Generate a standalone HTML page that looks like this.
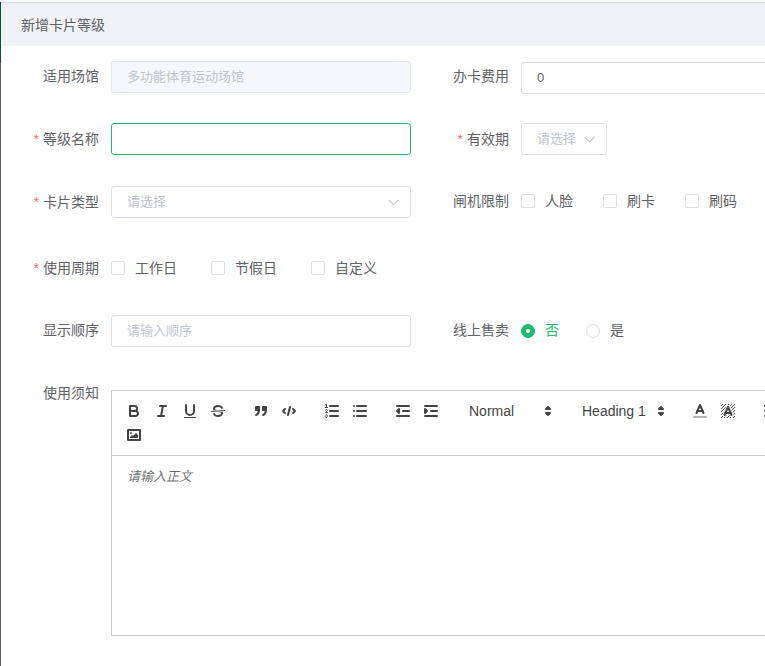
<!DOCTYPE html>
<html lang="zh-CN">
<head>
<meta charset="utf-8">
<title>新增卡片等级</title>
<style>
*{box-sizing:border-box;}
html,body{margin:0;padding:0;}
body{width:765px;height:666px;overflow:hidden;background:#fff;position:relative;
  font-family:"Liberation Sans",sans-serif;font-size:14px;color:#606266;}
.abs{position:absolute;}
#stripe-g{left:0;top:2px;width:1.4px;height:61px;background:#0b5532;}
#stripe-d{left:0;top:63px;width:1.4px;height:603px;background:#606060;}
#topstrip{left:0;top:0;width:765px;height:2px;background:#fafafb;}
#gap{left:1px;top:3px;width:1px;height:43px;background:#f8f9fb;}
#topline{left:1px;top:2px;width:764px;height:1px;background:#d4d6da;}
#header{left:1px;top:3px;width:764px;height:43px;background:#f0f2f5;}
#title{left:21px;top:3px;height:43px;line-height:44px;font-size:14px;color:#606266;white-space:nowrap;}
.lbl{position:absolute;height:32px;line-height:32px;font-size:14px;color:#606266;text-align:right;white-space:nowrap;padding-right:12px;}
.lbl.l{left:0;width:111px;}
.lbl.r{left:410px;width:111px;}
.req:before{content:"*";color:#f56c6c;margin-right:4px;}
.inp{position:absolute;height:32px;line-height:30px;border:1px solid #dcdfe6;border-radius:3px;background:#fff;
  padding:0 15px;font-size:13px;color:#606266;white-space:nowrap;overflow:hidden;}
.inp.dis{background:#f5f7fa;border-color:#e4e7ed;color:#c0c4cc;}
.inp.foc{border-color:#1fbb6f;}
.ph{color:#c0c4cc;}
.caret{position:absolute;width:11px;height:7px;}
.cb{position:absolute;width:14px;height:14px;border:1px solid #dcdfe6;border-radius:2px;background:#fff;}
.cbt{position:absolute;height:19px;line-height:19px;font-size:14px;color:#606266;white-space:nowrap;}
.rd{position:absolute;width:14px;height:14px;border:1px solid #dcdfe6;border-radius:50%;background:#fff;}
.rd.on{border-color:#1fbb6f;background:#1fbb6f;}
.rd.on:after{content:"";position:absolute;left:4px;top:4px;width:4px;height:4px;border-radius:50%;background:#fff;}
#toolbar{position:absolute;left:111px;top:390px;width:760px;height:66px;border:1px solid #ccc;padding:8px;background:#fff;
  font-size:0;line-height:0;white-space:normal;}
#toolbar .fm{display:inline-block;vertical-align:middle;margin-right:15px;height:24px;font-size:0;}
#toolbar button{background:none;border:none;display:inline-block;float:left;height:24px;padding:3px 5px;width:28px;margin:0;}
#toolbar svg{display:block;width:18px;height:18px;}
#toolbar .st{fill:none;stroke:#444;stroke-linecap:round;stroke-linejoin:round;stroke-width:2;}
#toolbar .st.th{stroke-width:1;}
#toolbar .fl{fill:#444;}
#toolbar .fl.st{fill:#444;}
#toolbar .pk{display:inline-block;float:left;position:relative;width:98px;height:24px;color:#444;font-size:14px;font-weight:500;}
#toolbar .pl{display:block;position:relative;height:100%;width:100%;padding-left:8px;padding-right:2px;line-height:22px;border:1px solid transparent;white-space:nowrap;}
#toolbar .pl svg{position:absolute;right:0;top:50%;margin-top:-9px;width:18px;height:18px;}
#toolbar .cp{display:inline-block;float:left;width:28px;height:24px;padding:2px 4px;border:1px solid transparent;}
#qlc{position:absolute;left:111px;top:456px;width:760px;height:180px;border:1px solid #ccc;border-top:0;background:#fff;}
#qle{position:absolute;left:15px;top:12px;font-size:13px;font-style:italic;color:rgba(0,0,0,0.6);line-height:18px;white-space:nowrap;}
</style>
</head>
<body>
<div class="abs" id="topstrip"></div>
<div class="abs" id="topline"></div>
<div class="abs" id="header"></div>
<div class="abs" id="gap"></div>
<div class="abs" id="stripe-g"></div>
<div class="abs" id="stripe-d"></div>
<div class="abs" id="title">新增卡片等级</div>

<!-- row 1 -->
<label class="lbl l" style="top:60px">适用场馆</label>
<div class="inp dis" style="left:111px;top:61px;width:300px">多功能体育运动场馆</div>
<label class="lbl r" style="top:60px">办卡费用</label>
<div class="inp" style="left:521px;top:62px;width:300px">0</div>

<!-- row 2 -->
<label class="lbl l req" style="top:123px">等级名称</label>
<div class="inp foc" style="left:111px;top:123px;width:300px"></div>
<label class="lbl r req" style="top:123px">有效期</label>
<div class="inp" style="left:521px;top:123px;width:86px;padding-right:30px"><span class="ph">请选择</span></div>
<svg class="caret" style="left:584px;top:135.8px" viewBox="0 0 11 7"><polyline points="0.5,0.8 5.5,5.8 10.5,0.8" fill="none" stroke="#c0c4cc" stroke-width="1.1"/></svg>

<!-- row 3 -->
<label class="lbl l req" style="top:186px">卡片类型</label>
<div class="inp" style="left:111px;top:186px;width:300px"><span class="ph">请选择</span></div>
<svg class="caret" style="left:388px;top:198.8px" viewBox="0 0 11 7"><polyline points="0.5,0.8 5.5,5.8 10.5,0.8" fill="none" stroke="#c0c4cc" stroke-width="1.1"/></svg>
<label class="lbl r" style="top:185px">闸机限制</label>
<span class="cb" style="left:521px;top:194px"></span><span class="cbt" style="left:545px;top:192px">人脸</span>
<span class="cb" style="left:603px;top:194px"></span><span class="cbt" style="left:627px;top:192px">刷卡</span>
<span class="cb" style="left:685px;top:194px"></span><span class="cbt" style="left:709px;top:192px">刷码</span>

<!-- row 4 -->
<label class="lbl l req" style="top:252px">使用周期</label>
<span class="cb" style="left:111px;top:261px"></span><span class="cbt" style="left:135px;top:259px">工作日</span>
<span class="cb" style="left:211px;top:261px"></span><span class="cbt" style="left:235px;top:259px">节假日</span>
<span class="cb" style="left:311px;top:261px"></span><span class="cbt" style="left:335px;top:259px">自定义</span>

<!-- row 5 -->
<label class="lbl l" style="top:314px">显示顺序</label>
<div class="inp" style="left:111px;top:315px;width:300px"><span class="ph">请输入顺序</span></div>
<label class="lbl r" style="top:314px">线上售卖</label>
<span class="rd on" style="left:521px;top:324px"></span><span class="cbt" style="left:545px;top:321px;color:#1fbb6f">否</span>
<span class="rd" style="left:586px;top:324px"></span><span class="cbt" style="left:610px;top:321px">是</span>

<!-- row 6 -->
<label class="lbl l" style="top:377px">使用须知</label>
<div id="toolbar">
<span class="fm">
<button type="button"><svg viewBox="0 0 18 18"><path class="st" d="M5,4H9.5A2.5,2.5,0,0,1,12,6.5v0A2.5,2.5,0,0,1,9.5,9H5A0,0,0,0,1,5,9V4A0,0,0,0,1,5,4Z"/><path class="st" d="M5,9h5.5A2.5,2.5,0,0,1,13,11.5v0A2.5,2.5,0,0,1,10.5,14H5a0,0,0,0,1,0,0V9A0,0,0,0,1,5,9Z"/></svg></button>
<button type="button"><svg viewBox="0 0 18 18"><line class="st" x1="7" x2="13" y1="4" y2="4"/><line class="st" x1="5" x2="11" y1="14" y2="14"/><line class="st" x1="8" x2="10" y1="14" y2="4"/></svg></button>
<button type="button"><svg viewBox="0 0 18 18"><path class="st" d="M5,3V9a4.012,4.012,0,0,0,4,4H9a4.012,4.012,0,0,0,4-4V3"/><rect class="fl" height="1" rx="0.5" ry="0.5" width="12" x="3" y="15"/></svg></button>
<button type="button"><svg viewBox="0 0 18 18"><line class="st th" x1="15.5" x2="2.5" y1="8.5" y2="9.5"/><path class="fl" d="M9.007,8C6.542,7.791,6,7.519,6,6.5,6,5.792,7.283,5,9,5c1.571,0,2.765.679,2.969,1.309a1,1,0,0,0,1.9-.617C13.356,4.106,11.354,3,9,3,6.2,3,4,4.538,4,6.5a3.2,3.2,0,0,0,.5,1.843Z"/><path class="fl" d="M8.984,10C11.457,10.208,12,10.479,12,11.5c0,0.708-1.283,1.5-3,1.5-1.571,0-2.765-.679-2.969-1.309a1,1,0,1,0-1.9.617C4.644,13.894,6.646,15,9,15c2.8,0,5-1.538,5-3.5a3.2,3.2,0,0,0-.5-1.843Z"/></svg></button>
</span><span class="fm">
<button type="button"><svg viewBox="0 0 18 18"><rect class="fl st" height="3" width="3" x="4" y="5"/><rect class="fl st" height="3" width="3" x="11" y="5"/><path class="fl st" fill-rule="evenodd" d="M7,8c0,4.031-3,5-3,5"/><path class="fl st" fill-rule="evenodd" d="M14,8c0,4.031-3,5-3,5"/></svg></button>
<button type="button"><svg viewBox="0 0 18 18"><polyline class="st" points="5 7 3 9 5 11"/><polyline class="st" points="13 7 15 9 13 11"/><line class="st" x1="10" x2="8" y1="5" y2="13"/></svg></button>
</span><span class="fm">
<button type="button"><svg viewBox="0 0 18 18"><line class="st" x1="7" x2="15" y1="4" y2="4"/><line class="st" x1="7" x2="15" y1="9" y2="9"/><line class="st" x1="7" x2="15" y1="14" y2="14"/><line class="st th" x1="2.5" x2="4.5" y1="5.5" y2="5.5"/><path class="fl" d="M3.5,6A0.5,0.5,0,0,1,3,5.5V3.085l-0.276.138A0.5,0.5,0,0,1,2.053,3c-0.124-.247-0.023-0.324.224-0.447l1-.5A0.5,0.5,0,0,1,4,2.5v3A0.5,0.5,0,0,1,3.5,6Z"/><path class="st th" d="M4.5,10.5h-2c0-.234,1.85-1.076,1.85-2.234A0.959,0.959,0,0,0,2.5,8.156"/><path class="st th" d="M2.5,14.846a0.959,0.959,0,0,0,1.85-.109A0.7,0.7,0,0,0,3.75,14a0.688,0.688,0,0,0,.6-0.736,0.959,0.959,0,0,0-1.85-.109"/></svg></button>
<button type="button"><svg viewBox="0 0 18 18"><line class="st" x1="6" x2="15" y1="4" y2="4"/><line class="st" x1="6" x2="15" y1="9" y2="9"/><line class="st" x1="6" x2="15" y1="14" y2="14"/><line class="st" x1="3" x2="3" y1="4" y2="4"/><line class="st" x1="3" x2="3" y1="9" y2="9"/><line class="st" x1="3" x2="3" y1="14" y2="14"/></svg></button>
</span><span class="fm">
<button type="button"><svg viewBox="0 0 18 18"><line class="st" x1="3" x2="15" y1="14" y2="14"/><line class="st" x1="3" x2="15" y1="4" y2="4"/><line class="st" x1="9" x2="15" y1="9" y2="9"/><polyline class="st" points="5 7 5 11 3 9 5 7"/></svg></button>
<button type="button"><svg viewBox="0 0 18 18"><line class="st" x1="3" x2="15" y1="14" y2="14"/><line class="st" x1="3" x2="15" y1="4" y2="4"/><line class="st" x1="9" x2="15" y1="9" y2="9"/><polyline class="fl st" points="3 7 3 11 5 9 3 7"/></svg></button>
</span><span class="fm">
<span class="pk"><span class="pl">Normal<svg viewBox="0 0 18 18"><polygon class="st" points="7 11 9 13 11 11 7 11"/><polygon class="st" points="7 7 9 5 11 7 7 7"/></svg></span></span>
</span><span class="fm">
<span class="pk"><span class="pl">Heading 1<svg viewBox="0 0 18 18"><polygon class="st" points="7 11 9 13 11 11 7 11"/><polygon class="st" points="7 7 9 5 11 7 7 7"/></svg></span></span>
</span><span class="fm">
<span class="cp"><svg viewBox="0 0 18 18"><line class="st" opacity="0.4" x1="3" x2="15" y1="15" y2="15"/><polyline class="st" points="5.5 11 9 3 12.5 11"/><line class="st" x1="11.63" x2="6.38" y1="9" y2="9"/></svg></span>
<span class="cp"><svg viewBox="0 0 18 18"><g class="fl"><polygon points="6 6.868 6 6 5 6 5 7 5.942 7 6 6.868"/><rect height="1" width="1" x="4" y="4"/><polygon points="6.817 5 6 5 6 6 6.38 6 6.817 5"/><rect height="1" width="1" x="2" y="6"/><rect height="1" width="1" x="3" y="5"/><rect height="1" width="1" x="4" y="7"/><polygon points="4 11.439 4 11 3 11 3 12 3.755 12 4 11.439"/><rect height="1" width="1" x="2" y="12"/><rect height="1" width="1" x="2" y="9"/><rect height="1" width="1" x="2" y="15"/><polygon points="4.63 10 4 10 4 11 4.192 11 4.63 10"/><rect height="1" width="1" x="3" y="8"/><path d="M10.832,4.2L11,4.582V4H10.708A1.948,1.948,0,0,1,10.832,4.2Z"/><path d="M7,4.582L7.168,4.2A1.929,1.929,0,0,1,7.292,4H7V4.582Z"/><path d="M8,13H7.683l-0.351.8a1.933,1.933,0,0,1-.124.2H8V13Z"/><rect height="1" width="1" x="12" y="2"/><rect height="1" width="1" x="11" y="3"/><path d="M9,3H8V3.282A1.985,1.985,0,0,1,9,3Z"/><rect height="1" width="1" x="2" y="3"/><rect height="1" width="1" x="6" y="2"/><rect height="1" width="1" x="3" y="2"/><rect height="1" width="1" x="5" y="3"/><rect height="1" width="1" x="9" y="2"/><rect height="1" width="1" x="15" y="14"/><polygon points="13.447 10.174 13.469 10.225 13.472 10.232 13.808 11 14 11 14 10 13.37 10 13.447 10.174"/><rect height="1" width="1" x="13" y="7"/><rect height="1" width="1" x="15" y="5"/><rect height="1" width="1" x="14" y="6"/><rect height="1" width="1" x="15" y="8"/><rect height="1" width="1" x="14" y="9"/><path d="M3.775,14H3v1H4V14.314A1.97,1.97,0,0,1,3.775,14Z"/><rect height="1" width="1" x="14" y="3"/><polygon points="12 6.868 12 6 11.62 6 12 6.868"/><rect height="1" width="1" x="15" y="2"/><rect height="1" width="1" x="12" y="5"/><rect height="1" width="1" x="13" y="4"/><polygon points="12.933 9 13 9 13 8 12.495 8 12.933 9"/><rect height="1" width="1" x="9" y="14"/><rect height="1" width="1" x="8" y="15"/><path d="M6,14.926V15H7V14.316A1.993,1.993,0,0,1,6,14.926Z"/><rect height="1" width="1" x="5" y="15"/><path d="M10.668,13.8L10.317,13H10v1h0.792A1.947,1.947,0,0,1,10.668,13.8Z"/><rect height="1" width="1" x="11" y="15"/><path d="M14.332,12.2a1.99,1.99,0,0,1,.166.8H15V12H14.245Z"/><rect height="1" width="1" x="14" y="15"/><rect height="1" width="1" x="15" y="11"/></g><polyline class="st" points="5.5 13 9 5 12.5 13"/><line class="st" x1="11.63" x2="6.38" y1="11" y2="11"/></svg></span>
</span><span class="fm">
<span class="cp"><svg viewBox="0 0 18 18"><line class="st" x1="3" x2="15" y1="9" y2="9"/><line class="st" x1="3" x2="13" y1="14" y2="14"/><line class="st" x1="3" x2="9" y1="4" y2="4"/></svg></span>
</span><span class="fm">
<button type="button"><svg viewBox="0 0 18 18"><line class="st" x1="5" x2="13" y1="3" y2="3"/><line class="st" x1="6" x2="9.35" y1="12" y2="3"/><line class="st" x1="11" x2="15" y1="11" y2="15"/><line class="st" x1="15" x2="11" y1="11" y2="15"/><rect class="fl" height="1" rx="0.5" ry="0.5" width="7" x="2" y="14"/></svg></button>
</span><span class="fm">
<button type="button"><svg viewBox="0 0 18 18"><rect class="st" height="10" width="12" x="3" y="4"/><circle class="fl" cx="6" cy="7" r="1"/><polyline class="fl" fill-rule="evenodd" points="5 12 5 11 7 9 8 10 11 7 13 9 13 12 5 12"/></svg></button>
</span>
</div>
<div id="qlc"><div id="qle">请输入正文</div></div>
</body>
</html>
